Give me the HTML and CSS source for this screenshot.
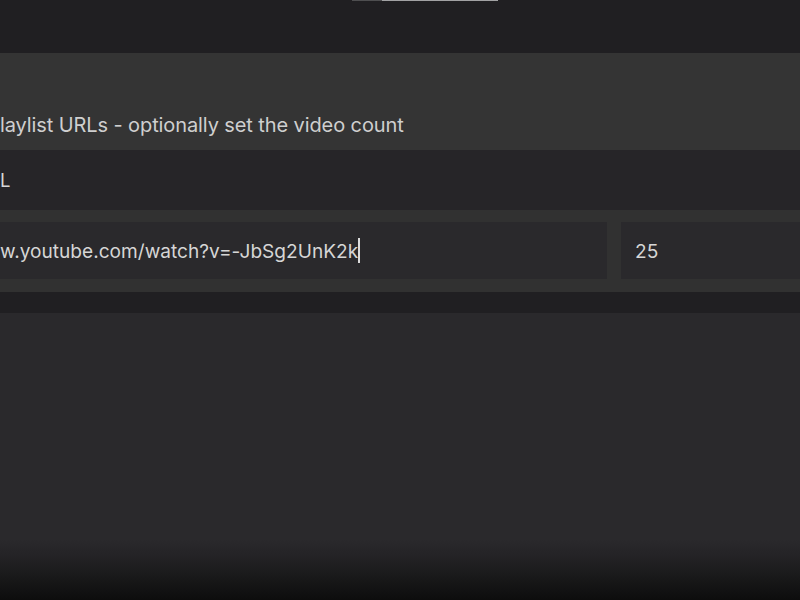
FILE: index.html
```html
<!DOCTYPE html>
<html>
<head>
<meta charset="utf-8">
<link rel="stylesheet" href="styles.css">
</head>
<body>
<div class="page">
  <div class="topbar">
    <div class="scroll-indicator"><span class="seg-dark"></span><span class="seg-light"></span></div>
  </div>
  <div class="panel">
    <div class="desc">laylist URLs - optionally set the video count</div>
  </div>
  <div class="label-row">
    <div class="label">L</div>
  </div>
  <div class="input-row">
    <div class="field url-field">
      <span class="url-text">w.youtube.com/watch?v=-JbSg2UnK2k</span><span class="caret"></span>
    </div>
    <div class="field count-field"><span>25</span></div>
  </div>
  <div class="sep"></div>
  <div class="content"></div>
  <div class="fade"></div>
</div>
</body>
</html>
```

FILE: styles.css
```css
* { box-sizing: border-box; }
html, body { margin: 0; padding: 0; }
body {
  width: 800px;
  height: 600px;
  overflow: hidden;
  background: #2a292c;
  font-family: Inter, "Noto Sans", "Liberation Sans", sans-serif;
  color: #d2d2d2;
}
.page {
  display: flex;
  flex-direction: column;
  height: 600px;
}
.topbar {
  height: 53px;
  background: #201f22;
  flex: none;
}
.scroll-indicator {
  display: flex;
  margin-left: 352px;
  width: 146px;
  height: 1px;
}
.seg-dark { width: 30px; background: #4e4e50; }
.seg-light { flex: 1; background: #a2a2a4; }
.panel {
  height: 97px;
  background: #343434;
  flex: none;
  display: flex;
  align-items: flex-end;
  padding-bottom: 13px;
}
.desc {
  white-space: nowrap;
  font-size: 20px;
  line-height: 24px;
  color: #cfcfcf;
  letter-spacing: -0.1px;
}
.label-row {
  height: 60px;
  background: #262528;
  flex: none;
  display: flex;
  align-items: center;
}
.label {
  font-size: 18.5px;
  line-height: 24px;
  color: #d8d8d8;
}
.input-row {
  height: 82px;
  background: #313131;
  flex: none;
  display: flex;
  gap: 14px;
  padding-top: 12px;
}
.field {
  height: 57px;
  background: #2a292c;
  display: flex;
  align-items: center;
  font-size: 19.1px;
  color: #d6d6d6;
}
.url-field {
  width: 607px;
}
.url-text {
  white-space: nowrap;
}
.caret {
  width: 2px;
  height: 25px;
  background: #dcdcdc;
  margin-left: 0;
}
.count-field {
  flex: 1;
  padding-left: 14px;
}
.sep {
  height: 21px;
  background: #201f22;
  flex: none;
}
.content {
  flex: 1;
  background: #2a292c;
}
.fade {
  height: 60px;
  flex: none;
  background: linear-gradient(to bottom, #2a292c 0%, #242326 25%, #1b1b1c 55%, #0d0d0d 100%);
}
```
